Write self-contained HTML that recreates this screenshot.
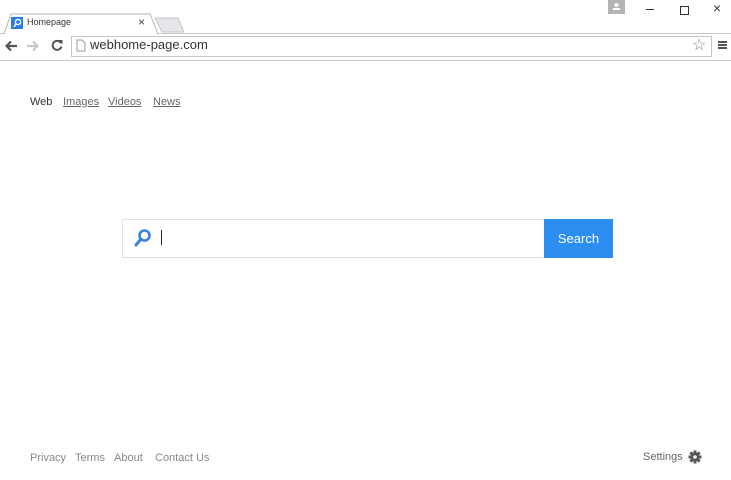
<!DOCTYPE html>
<html><head><style>
body{margin:0;width:731px;height:480px;background:#fff;font-family:"Liberation Sans",sans-serif;position:relative;overflow:hidden}
.a{position:absolute}
</style></head><body>
<div class="a" style="left:0;top:0;width:731px;height:34px;background:#fff"></div>
<div class="a" style="left:0;top:33px;width:731px;height:1px;background:#c8c8c8"></div>
<!-- tab -->
<svg class="a" style="left:0;top:12px" width="200" height="24">
<path d="M4 22 L11 2 L150 2 L158 22" fill="#fff" stroke="#b5b5b5"/>
<path d="M155 6 L178 6 L184 20 L162 20 Z" fill="#e4e6ea" stroke="#c4c6c9"/>
</svg>
<div class="a" style="left:6px;top:33px;width:150px;height:1px;background:#fff"></div>
<div class="a" style="left:11px;top:17px;width:12px;height:12px;background:#2b7de0"></div>
<svg class="a" style="left:11px;top:17px" width="12" height="12"><circle cx="7" cy="5" r="2.6" fill="none" stroke="#fff" stroke-width="1.4"/><path d="M5 7 L3 10" stroke="#fff" stroke-width="1.5"/></svg>
<div class="a" style="left:27px;top:17px;font-size:9px;color:#333">Homepage</div>
<div class="a" style="left:138px;top:15px;font-size:12px;color:#444">×</div>
<!-- window controls -->
<div class="a" style="left:608px;top:0;width:17px;height:14px;background:#b4b4b4"></div>
<svg class="a" style="left:608px;top:0" width="17" height="14"><circle cx="8.5" cy="5" r="2" fill="#fff"/><path d="M5 10 h7 v-2 h-7z" fill="#fff"/></svg>
<div class="a" style="left:646px;top:9px;width:8px;height:1px;background:#333"></div>
<div class="a" style="left:680px;top:6px;width:7px;height:7px;border:1px solid #333"></div>
<div class="a" style="left:713px;top:0px;font-size:14px;color:#333">×</div>
<!-- toolbar -->
<div class="a" style="left:0;top:60px;width:731px;height:1px;background:#c8c8c8"></div>
<svg class="a" style="left:4px;top:40px" width="14" height="12"><path d="M13 6H3M7 1.5L2.5 6L7 10.5" fill="none" stroke="#555" stroke-width="2.2"/></svg>
<svg class="a" style="left:26px;top:40px" width="14" height="12"><path d="M1 6H11M7 1.5L11.5 6L7 10.5" fill="none" stroke="#c8c8c8" stroke-width="2.2"/></svg>
<svg class="a" style="left:51px;top:39px" width="12" height="12"><path d="M10 4 A4.5 4.5 0 1 0 10.5 7.5" fill="none" stroke="#555" stroke-width="2"/><path d="M7 1 L11.5 1 L11.5 5.5Z" fill="#555"/></svg>
<div class="a" style="left:71px;top:36px;width:639px;height:19px;border:1px solid #c5c5c5;background:#fff"></div>
<svg class="a" style="left:76px;top:39px" width="10" height="13"><path d="M1 1h5l3 3v8H1z" fill="#fff" stroke="#999"/></svg>
<div class="a" style="left:90px;top:37px;font-size:13px;color:#333">webhome-page.com</div>
<div class="a" style="left:692px;top:35px;font-size:16px;color:#888">☆</div>
<div class="a" style="left:718px;top:41px;width:9px;height:2px;background:#555;box-shadow:0 3px 0 #555,0 6px 0 #555"></div>
<!-- nav -->
<div class="a" style="left:30px;top:96px;font-size:11px;color:#333">Web</div>
<div class="a" style="left:63px;top:96px;font-size:11px;color:#666;text-decoration:underline">Images</div>
<div class="a" style="left:108px;top:96px;font-size:11px;color:#666;text-decoration:underline">Videos</div>
<div class="a" style="left:153px;top:96px;font-size:11px;color:#666;text-decoration:underline">News</div>
<!-- search -->
<div class="a" style="left:122px;top:219px;width:421px;height:37px;border:1px solid #e2e2e2;border-right:none"></div>
<svg class="a" style="left:133px;top:228px" width="20" height="20"><circle cx="11.5" cy="7.5" r="5" fill="none" stroke="#3b82e0" stroke-width="2.6"/><path d="M8 11 L3 17" stroke="#3b82e0" stroke-width="3" stroke-linecap="round"/></svg>
<div class="a" style="left:161px;top:230px;width:1px;height:15px;background:#222"></div>
<div class="a" style="left:544px;top:219px;width:69px;height:39px;background:#2b8ef0;color:#fff;font-size:13px;line-height:39px;text-align:center">Search</div>
<!-- footer -->
<div class="a" style="left:30px;top:452px;font-size:11px;color:#888">Privacy</div>
<div class="a" style="left:75px;top:452px;font-size:11px;color:#888">Terms</div>
<div class="a" style="left:114px;top:452px;font-size:11px;color:#888">About</div>
<div class="a" style="left:155px;top:452px;font-size:11px;color:#888">Contact Us</div>
<div class="a" style="left:643px;top:451px;font-size:11px;color:#666">Settings</div>
<svg class="a" style="left:688px;top:450px" width="14" height="14" viewBox="0 0 14 14"><g fill="#555"><circle cx="7" cy="7" r="4.5"/><rect x="5.5" y="0.5" width="3" height="13"/><rect x="0.5" y="5.5" width="13" height="3"/><rect x="5.5" y="0.5" width="3" height="13" transform="rotate(45 7 7)"/><rect x="5.5" y="0.5" width="3" height="13" transform="rotate(-45 7 7)"/></g><circle cx="7" cy="7" r="1.8" fill="#fff"/></svg>
</body></html>
